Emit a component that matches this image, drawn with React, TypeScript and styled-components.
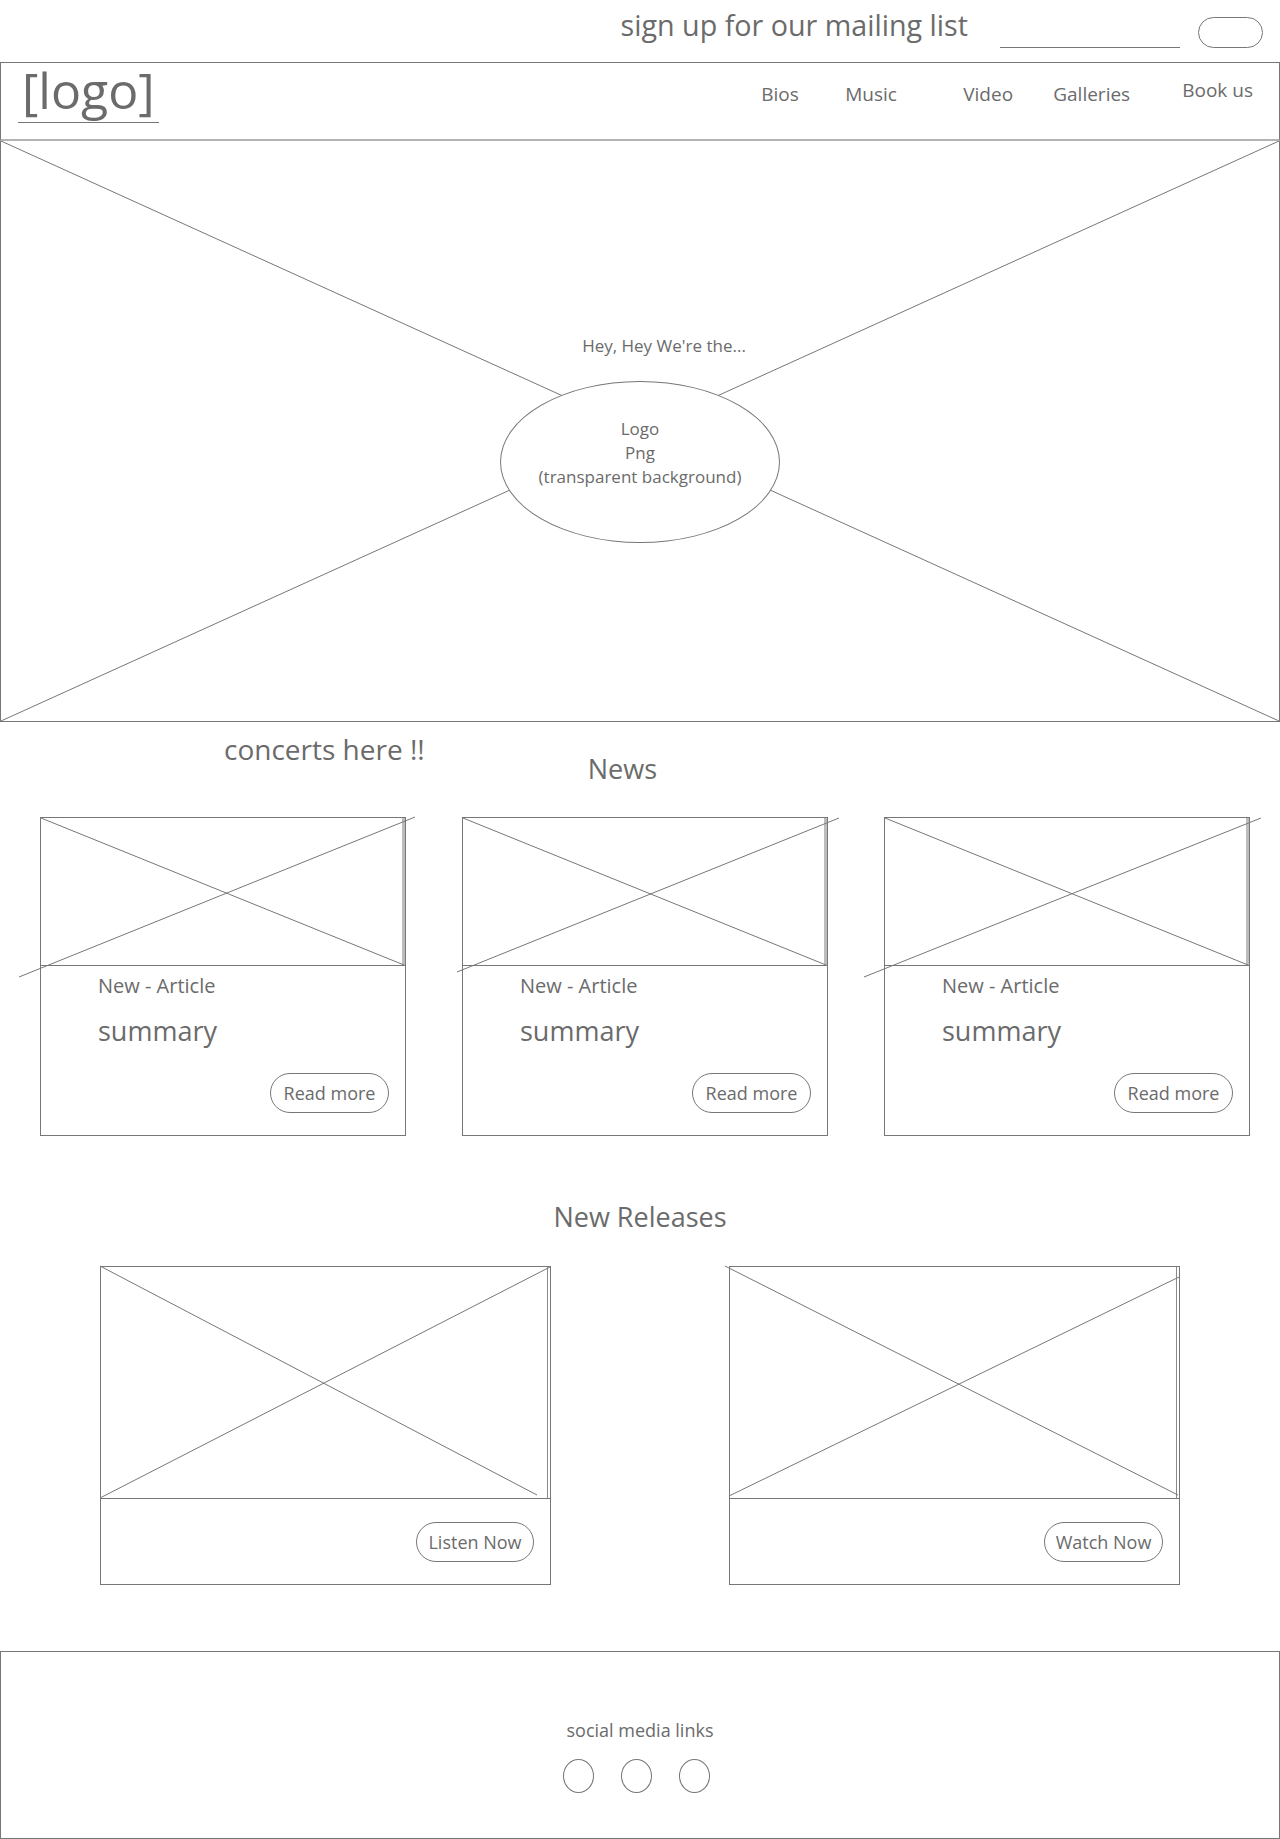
import React from "react";
import styled, { createGlobalStyle } from "styled-components";

const INK = "#6b6b6b";
const LINE = "#777777";

const GlobalStyle = createGlobalStyle`
  * { box-sizing: border-box; }
  body {
    margin: 0;
    background: #fff;
    color: ${INK};
    font-family: "Open Sans", "Noto Sans", sans-serif;
  }
`;

const Page = styled.div`
  width: 1280px;
  min-height: 1839px;
  display: flex;
  flex-direction: column;
`;

/* mailing list strip */
const TopBar = styled.div`
  height: 62px;
  display: flex;
  justify-content: flex-end;
  align-items: flex-start;
  padding-right: 17px;
`;

const MailText = styled.span`
  margin-top: 6px;
  font-size: 28.7px;
  line-height: 38px;
`;

const MailInput = styled.input`
  margin: 17px 0 0 32px;
  width: 180px;
  height: 31px;
  border: none;
  border-bottom: 1px solid ${LINE};
  background: transparent;
  outline: none;
`;

const SubmitPill = styled.button`
  margin: 17px 0 0 18px;
  width: 65px;
  height: 31px;
  border: 1px solid ${LINE};
  border-radius: 16px;
  background: #fff;
  padding: 0;
`;

/* header */
const Header = styled.header`
  height: 79px;
  display: flex;
  justify-content: space-between;
  align-items: flex-start;
  border: 1px solid ${LINE};
  border-bottom: 2px solid #b4b4b4;
  padding: 0 26px 0 17px;
`;

const Logo = styled.div`
  margin-top: 2px;
  padding: 0 4px 7px;
  font-size: 50px;
  line-height: 50px;
  border-bottom: 1px solid ${LINE};
`;

const NavList = styled.nav`
  margin-top: 18px;
  display: grid;
  grid-template-columns: 84px 118px 90px 129px auto;
`;

const NavLink = styled.a<{ $raise?: number }>`
  font-size: 19px;
  line-height: 26px;
  color: ${INK};
  text-decoration: none;
  transform: translateY(${({ $raise }) => -($raise ?? 0)}px);
`;

/* hero */
const Hero = styled.section`
  position: relative;
  height: 581px;
  border: 1px solid ${LINE};
  border-top: none;
  display: flex;
  flex-direction: column;
  align-items: center;
  padding-top: 193px;
`;

const Lines = styled.svg`
  position: absolute;
  left: 0;
  top: 0;
  width: 100%;
  height: 100%;
  overflow: visible;
  pointer-events: none;
`;

const Tagline = styled.div`
  position: relative;
  margin-left: 48px;
  font-size: 17px;
  line-height: 24px;
`;

const LogoEllipse = styled.div`
  position: relative;
  margin-top: 23px;
  width: 280px;
  height: 162px;
  border: 1px solid ${LINE};
  border-radius: 50%;
  background: #fff;
  padding-top: 35px;
  text-align: center;
  font-size: 17px;
  line-height: 24px;
`;

/* news */
const NewsHead = styled.div`
  height: 65px;
  display: flex;
  align-items: flex-start;
  padding: 8px 0 0 224px;
`;

const Concerts = styled.span`
  font-size: 28px;
  line-height: 38px;
`;

const SectionTitle = styled.h2`
  margin: 0;
  font-weight: 400;
  font-size: 27px;
  line-height: 37px;
`;

const NewsTitle = styled(SectionTitle)`
  margin: 20px 0 0 163px;
`;

const CardRow = styled.div<{ $gap: number; $justify: string }>`
  display: flex;
  justify-content: ${({ $justify }) => $justify};
  gap: ${({ $gap }) => $gap}px;
  padding-left: ${({ $justify }) => ($justify === "flex-start" ? 40 : 0)}px;
`;

const NewsRow = styled(CardRow)`
  margin-top: 30px;
`;

const Card = styled.article<{ $width: number; $height: number }>`
  width: ${({ $width }) => $width}px;
  height: ${({ $height }) => $height}px;
  border: 1px solid ${LINE};
  display: flex;
  flex-direction: column;
`;

const ImageArea = styled.div<{ $height: number; $edge?: boolean }>`
  position: relative;
  flex: none;
  height: ${({ $height }) => $height}px;
  border-bottom: 1px solid ${LINE};
  box-shadow: ${({ $edge }) =>
    $edge ? "inset -3px 0 0 #bcbcbc" : "inset -2px 0 0 #fff, inset -3px 0 0 #8a8a8a"};
`;

const CardBody = styled.div<{ $top: number }>`
  flex: 1;
  display: flex;
  flex-direction: column;
  padding: ${({ $top }) => $top}px 16px 0 57px;
`;

const ArticleLabel = styled.div`
  font-size: 20px;
  line-height: 27px;
`;

const Summary = styled.div`
  margin-top: 13px;
  font-size: 27px;
  line-height: 37px;
`;

const ActionButton = styled.button<{ $width: number; $top: number }>`
  align-self: flex-end;
  margin-top: ${({ $top }) => $top}px;
  width: ${({ $width }) => $width}px;
  height: 40px;
  border: 1px solid ${LINE};
  border-radius: 20px;
  background: #fff;
  color: ${INK};
  font-family: inherit;
  font-size: 18px;
  padding: 0;
`;

const ReleasesTitle = styled(SectionTitle)`
  margin: 62px 0 31px;
  text-align: center;
`;

/* footer */
const Footer = styled.footer`
  margin-top: 66px;
  height: 188px;
  border: 1px solid ${LINE};
  display: flex;
  flex-direction: column;
  align-items: center;
  padding-top: 66px;
`;

const FooterLabel = styled.div`
  font-size: 18px;
  line-height: 25px;
`;

const SocialRow = styled.div`
  margin-top: 16px;
  padding-right: 7px;
  display: flex;
  gap: 27px;
`;

const SocialDot = styled.span`
  width: 31px;
  height: 34px;
  border: 1px solid ${LINE};
  border-radius: 50%;
`;

type Seg = [number, number, number, number];

const Cross = ({ segs }: { segs: Seg[] }) => (
  <Lines>
    {segs.map(([x1, y1, x2, y2], i) => (
      <line key={i} x1={x1} y1={y1} x2={x2} y2={y2} stroke={LINE} strokeWidth={1} />
    ))}
  </Lines>
);

const news: Seg[][] = [
  [[0, 0, 363, 147], [-22, 159, 374, -1]],
  [[0, 0, 363, 147], [-6, 154, 376, 0]],
  [[0, 0, 363, 147], [-21, 159, 376, 0]],
];

const releases: { label: string; segs: Seg[] }[] = [
  { label: "Listen Now", segs: [[-1, -1, 436, 228], [-1, 231, 449, 0]] },
  { label: "Watch Now", segs: [[-5, -1, 448, 228], [-1, 229, 449, 10]] },
];

export default function App() {
  return (
    <Page>
      <GlobalStyle />
      <TopBar>
        <MailText>sign up for our mailing list</MailText>
        <MailInput aria-label="email" />
        <SubmitPill aria-label="submit" />
      </TopBar>

      <Header>
        <Logo>[logo]</Logo>
        <NavList>
          <NavLink>Bios</NavLink>
          <NavLink>Music</NavLink>
          <NavLink>Video</NavLink>
          <NavLink>Galleries</NavLink>
          <NavLink $raise={4}>Book us</NavLink>
        </NavList>
      </Header>

      <Hero>
        <Cross segs={[[0, 0, 1278, 580], [1278, 0, 0, 580]]} />
        <Tagline>Hey, Hey We're the...</Tagline>
        <LogoEllipse>
          Logo
          <br />
          Png
          <br />
          (transparent background)
        </LogoEllipse>
      </Hero>

      <NewsHead>
        <Concerts>concerts here !!</Concerts>
        <NewsTitle>News</NewsTitle>
      </NewsHead>

      <NewsRow $gap={56} $justify="flex-start">
        {news.map((segs, i) => (
          <Card key={i} $width={366} $height={319}>
            <ImageArea $height={148} $edge>
              <Cross segs={segs} />
            </ImageArea>
            <CardBody $top={6}>
              <ArticleLabel>New - Article</ArticleLabel>
              <Summary>summary</Summary>
              <ActionButton $width={119} $top={24}>
                Read more
              </ActionButton>
            </CardBody>
          </Card>
        ))}
      </NewsRow>

      <ReleasesTitle>New Releases</ReleasesTitle>

      <CardRow $gap={178} $justify="center">
        {releases.map((r) => (
          <Card key={r.label} $width={451} $height={319}>
            <ImageArea $height={232}>
              <Cross segs={r.segs} />
            </ImageArea>
            <CardBody $top={0}>
              <ActionButton $width={r.label === "Listen Now" ? 118 : 119} $top={23}>
                {r.label}
              </ActionButton>
            </CardBody>
          </Card>
        ))}
      </CardRow>

      <Footer>
        <FooterLabel>social media links</FooterLabel>
        <SocialRow>
          <SocialDot />
          <SocialDot />
          <SocialDot />
        </SocialRow>
      </Footer>
    </Page>
  );
}
